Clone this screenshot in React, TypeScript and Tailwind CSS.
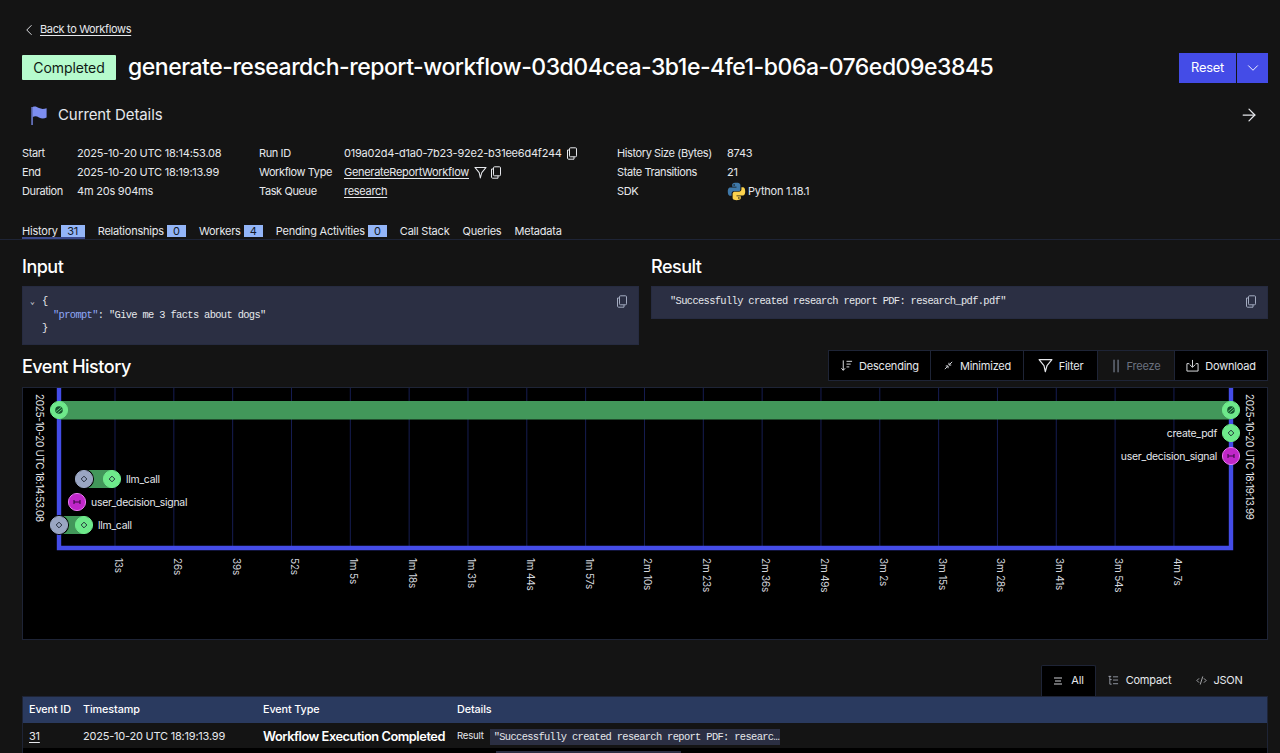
import React from 'react';
import { ChevronLeft, ChevronDown, ArrowRight, CodeXml } from 'lucide-react';

const TICKS = ['13s', '26s', '39s', '52s', '1m 5s', '1m 18s', '1m 31s', '1m 44s', '1m 57s', '2m 10s', '2m 23s', '2m 36s', '2m 49s', '3m 2s', '3m 15s', '3m 28s', '3m 41s', '3m 54s', '4m 7s'];

const CopyIcon = ({ className = '' }: { className?: string }) => (
  <svg viewBox="0 0 12 13" width="12" height="13" fill="none" stroke="currentColor" strokeWidth="1" className={className}>
    <rect x="3.5" y="0.8" width="7" height="9" rx="1" />
    <path d="M3.5 3H1.5V11.2C1.5 11.8 2 12.2 2.5 12.2H8V9.8" />
  </svg>
);

const FilterIcon = ({ size = 13 }: { size?: number }) => (
  <svg viewBox="0 0 14 14" width={size} height={size} fill="none" stroke="currentColor" strokeWidth="1.1" strokeLinejoin="round">
    <path d="M1 1.5H13L8.4 7.2L6.8 12.8L5.6 7.2Z" />
  </svg>
);

const Stat = ({ label, children, labelClass }: { label: string; children: React.ReactNode; labelClass: string }) => (
  <div className="flex items-center h-[19px]">
    <span className={`${labelClass} shrink-0 tracking-[-0.4px]`}>{label}</span>
    {children}
  </div>
);

const Tab = ({ label, count, active, wide }: { label: string; count?: string; active?: boolean; wide?: boolean }) => (
  <div className={`flex items-center gap-[3px] h-[14px] border-b-2 ${active ? 'border-[#3b4a8c]' : 'border-transparent'}`}>
    <span>{label}</span>
    {count && <span className={`bg-[#93b5f8] text-[#111827] ${wide ? 'w-[24px]' : 'w-[19px]'} h-[12px] text-[11px] leading-[12px] text-center`}>{count}</span>}
  </div>
);

const Node = ({ x, y, kind }: { x: number; y: number; kind: 'green' | 'gray' | 'pink' | 'flag' }) => {
  const fill = kind === 'gray' ? '#9aa6c3' : kind === 'pink' ? '#c026c9' : '#6ee98b';
  const ring = kind === 'gray' ? '#9aa6c3' : kind === 'pink' ? '#e879f0' : '#6ee98b';
  return (
    <g>
      {kind === 'gray' && <circle cx={x} cy={y} r={10} fill="#000" />}
      <circle cx={x} cy={y} r={8.6} fill={fill} stroke={ring} strokeWidth="1" />
      {(kind === 'green' || kind === 'gray') && (
        <rect x={x - 2} y={y - 2} width="4" height="4" fill="none" stroke="#1f2937" strokeWidth="0.9" transform={`rotate(45 ${x} ${y})`} />
      )}
      {kind === 'pink' && (
        <path d={`M${x - 3} ${y - 2}V${y + 2}M${x + 3} ${y - 2}V${y + 2}M${x - 3} ${y}H${x + 3}`} stroke="#3b0a45" strokeWidth="1.1" fill="none" />
      )}
      {kind === 'flag' && (
        <g>
          <circle cx={x} cy={y} r="3.8" fill="#14532d" />
          <path d={`M${x - 3} ${y + 1.5}L${x + 2.5} ${y - 3}M${x - 1.5} ${y + 3}L${x + 3.5} ${y - 1}`} stroke="#6ee98b" strokeWidth="0.8" />
        </g>
      )}
    </g>
  );
};

const Timeline = () => (
  <svg viewBox="23 388 1244 251" width="1244" height="251" className="block" fontFamily="Inter, sans-serif">
    {TICKS.map((t, i) => {
      const x = 115 + i * 58.83;
      return (
        <g key={t}>
          <line x1={x} y1={388} x2={x} y2={546} stroke="#161d52" strokeWidth="1" />
          <text transform={`translate(${x} 558) rotate(90)`} fontSize="10" letterSpacing="-0.2" fill="#d4d7de">{t}</text>
        </g>
      );
    })}
    <path d="M59 388V548H1231V388" fill="none" stroke="#444ce7" strokeWidth="4.4" />
    <rect x="59" y="401" width="1172" height="18.5" fill="#42975a" />
    <rect x="84" y="470" width="28" height="18" fill="#42975a" />
    <rect x="59" y="516" width="25" height="18" fill="#42975a" />
    <Node x={59} y={410} kind="flag" />
    <Node x={1231} y={410} kind="flag" />
    <Node x={1231} y={433} kind="green" />
    <Node x={1231} y={456} kind="pink" />
    <Node x={84} y={479} kind="gray" />
    <Node x={112} y={479} kind="green" />
    <Node x={77} y={502} kind="pink" />
    <Node x={59} y={525} kind="gray" />
    <Node x={84} y={525} kind="green" />
    <g fontSize="10.4" fill="#e5e7eb" letterSpacing="-0.25">
      <text x="126" y="483">llm_call</text>
      <text x="91" y="506">user_decision_signal</text>
      <text x="98" y="529">llm_call</text>
      <text x="1217" y="437" textAnchor="end">create_pdf</text>
      <text x="1217" y="460" textAnchor="end">user_decision_signal</text>
      <text transform="translate(36 394) rotate(90)" fontSize="10" letterSpacing="-0.33">2025-10-20 UTC 18:14:53.08</text>
      <text transform="translate(1246 394) rotate(90)" fontSize="10" letterSpacing="-0.33">2025-10-20 UTC 18:19:13.99</text>
    </g>
  </svg>
);

const ToolBtn = ({ icon, label, w, dim }: { icon: React.ReactNode; label: string; w: string; dim?: boolean }) => (
  <div className={`${w} flex items-center justify-center gap-[6px] border-r border-[#1e2436] last:border-r-0 ${dim ? 'bg-[#141414] text-[#6b7280]' : 'bg-black'}`}>
    {icon}
    <span className="pt-[1px]">{label}</span>
  </div>
);

export default function App() {
  return (
    <div className="h-[753px] w-[1280px] overflow-hidden bg-[#141414] text-[#e6e8ec] text-[11px] tracking-[-0.22px] font-['Inter',sans-serif]">
      <div className="pl-[22px] pr-[12px] pt-[21px]">
        <div className="flex items-center gap-[2px] h-[17px] -ml-[2px]">
          <ChevronLeft size={18} strokeWidth={1.25} />
          <span className="underline underline-offset-2 tracking-[-0.35px]">Back to Workflows</span>
        </div>

        <div className="flex items-center justify-between mt-[15px] h-[29px]">
          <div className="flex items-center gap-[12px]">
            <span className="bg-[#b6fbcd] text-[#0f1a14] w-[94px] h-[25px] flex items-center justify-center text-[14px] tracking-[-0.1px] rounded-[1px]">Completed</span>
            <h1 className="text-[23px] font-medium text-white leading-none tracking-[-0.48px]">generate-researdch-report-workflow-03d04cea-3b1e-4fe1-b06a-076ed09e3845</h1>
          </div>
          <div className="flex text-white text-[12.8px] h-[30px] gap-[1px]">
            <div className="w-[57px] bg-[#444ce7] flex items-center justify-center">Reset</div>
            <div className="w-[31px] bg-[#444ce7] flex items-center justify-center">
              <ChevronDown size={18} strokeWidth={1.25} />
            </div>
          </div>
        </div>

        <div className="flex items-center justify-between mt-[19px] h-[28px]">
          <div className="flex items-center gap-[11px] pl-[9px]">
            <svg viewBox="0 0 16 20" width="16" height="19" fill="#7d8ef0">
              <path d="M0 1H1.4V20H0Z" />
              <path d="M1.4 1C4 0 5.5 .8 8 2.2C10.5 3.4 13 3.2 16 2.4V12C13 13.6 10.5 13.4 8 12C5.5 10.8 4 10.4 1.4 11.6Z" />
            </svg>
            <span className="text-[15px] tracking-[-0.1px]">Current Details</span>
          </div>
          <ArrowRight size={20} strokeWidth={1.5} className="mr-[9px]" />
        </div>

        <div className="flex mt-[15px]">
          <div className="w-[237px]">
            <Stat label="Start" labelClass="w-[55px]">2025-10-20 UTC 18:14:53.08</Stat>
            <Stat label="End" labelClass="w-[55px]">2025-10-20 UTC 18:19:13.99</Stat>
            <Stat label="Duration" labelClass="w-[55px]">4m 20s 904ms</Stat>
          </div>
          <div className="w-[358px]">
            <Stat label="Run ID" labelClass="w-[85px]">
              019a02d4-d1a0-7b23-92e2-b31ee6d4f244
              <CopyIcon className="ml-[4px]" />
            </Stat>
            <Stat label="Workflow Type" labelClass="w-[85px]">
              <span className="underline underline-offset-2 tracking-[-0.3px]">GenerateReportWorkflow</span>
              <span className="ml-[5px]"><FilterIcon size={13} /></span>
              <CopyIcon className="ml-[3px]" />
            </Stat>
            <Stat label="Task Queue" labelClass="w-[85px]">
              <span className="underline underline-offset-2 tracking-[-0.3px]">research</span>
            </Stat>
          </div>
          <div>
            <Stat label="History Size (Bytes)" labelClass="w-[110px]">8743</Stat>
            <Stat label="State Transitions" labelClass="w-[110px]">21</Stat>
            <Stat label="SDK" labelClass="w-[110px]">
              <svg viewBox="0 0 24 24" width="19" height="19" className="mr-[2px]">
                <path fill="#3f78a8" d="M11.9 1C6.3 1 6.6 3.4 6.6 3.4V6h5.4v.8H4.4S1 6.4 1 12s3 5.4 3 5.4h1.8v-2.6s-.1-3 3-3h5.3s2.8 0 2.8-2.8V3.9S17.3 1 11.9 1zM9 2.7a1 1 0 1 1 0 2 1 1 0 0 1 0-2z" />
                <path fill="#fcd34d" d="M12.1 23c5.6 0 5.3-2.4 5.3-2.4V18H12v-.8h7.6s3.4.4 3.4-5.2-3-5.4-3-5.4h-1.800v2.600s.1 3-3 3H9.900s-2.800 0-2.800 2.800v4.900S6.700 23 12.100 23zm2.900-1.700a1 1 0 1 1 0-2 1 1 0 0 1 0 2z" />
              </svg>
              Python 1.18.1
            </Stat>
          </div>
        </div>

        <div className="flex gap-[13px] mt-[24px]">
          <Tab label="History" count="31" active wide />
          <Tab label="Relationships" count="0" />
          <Tab label="Workers" count="4" />
          <Tab label="Pending Activities" count="0" />
          <Tab label="Call Stack" />
          <Tab label="Queries" />
          <Tab label="Metadata" />
        </div>
      </div>

      <div className="border-t border-[#1e2436]" />

      <div className="pl-[22px] pr-[12px]">
        <div className="grid grid-cols-2 gap-[12px] mt-[15px] items-start h-[90px]">
          <div>
            <h2 className="text-[18px] font-medium leading-[23px] tracking-[-0.5px] text-white">Input</h2>
            <div className="relative mt-[8px] h-[59px] bg-[#2b2f43] border border-[#262b40] pl-[7px] pt-[8px] font-['Liberation_Mono',monospace] text-[10.4px] tracking-[-0.64px] leading-[13.5px]">
              <div><span className="inline-block w-[12px] text-[8px]">⌄</span>{'{'}</div>
              <div className="pl-[23px]"><span className="text-[#8fa8f8]">"prompt"</span>: "Give me 3 facts about dogs"</div>
              <div className="pl-[12px]">{'}'}</div>
              <CopyIcon className="absolute right-[10px] top-[8px] text-[#a3abc0]" />
            </div>
          </div>
          <div>
            <h2 className="text-[18px] font-medium leading-[23px] tracking-[-0.5px] text-white">Result</h2>
            <div className="relative mt-[8px] h-[33px] bg-[#2b2f43] border border-[#262b40] pl-[18px] pt-[8px] font-['Liberation_Mono',monospace] text-[10.4px] tracking-[-0.64px] leading-[13.5px]">
              "Successfully created research report PDF: research_pdf.pdf"
              <CopyIcon className="absolute right-[10px] top-[8px] text-[#a3abc0]" />
            </div>
          </div>
        </div>

        <div className="flex items-center justify-between mt-[5px] h-[31px]">
          <h2 className="text-[18px] font-medium tracking-[-0.5px] text-white pt-[1px]">Event History</h2>
          <div className="flex h-[31px] border border-[#1e2436]">
            <ToolBtn
              w="w-[102px]"
              label="Descending"
              icon={
                <svg viewBox="0 0 14 14" width="13" height="13" fill="none" stroke="currentColor" strokeWidth="1">
                  <path d="M3.5 1.5V12M1.5 10L3.5 12.2L5.5 10M7 2.5H13M7 5.5H11.5M7 8.5H10" />
                </svg>
              }
            />
            <ToolBtn
              w="w-[93px]"
              label="Minimized"
              icon={
                <svg viewBox="0 0 12 12" width="11" height="11" fill="none" stroke="currentColor" strokeWidth="1">
                  <path d="M2 10L5 7M3 6.5H5.5V9M10 2L7 5M9 5.5H6.5V3" />
                </svg>
              }
            />
            <ToolBtn w="w-[74px]" label="Filter" icon={<FilterIcon size={15} />} />
            <ToolBtn
              w="w-[77px]"
              label="Freeze"
              dim
              icon={
                <svg viewBox="0 0 10 14" width="9" height="14" fill="currentColor">
                  <rect x="1.5" y="0" width="1.5" height="14" />
                  <rect x="6" y="0" width="1.5" height="14" />
                </svg>
              }
            />
            <ToolBtn
              w="w-[92px]"
              label="Download"
              icon={
                <svg viewBox="0 0 14 14" width="13" height="13" fill="none" stroke="currentColor" strokeWidth="1">
                  <path d="M7 1V8.5M4 6L7 9L10 6M3.5 5H1V13H13V5H10.5" />
                </svg>
              }
            />
          </div>
        </div>

        <div className="mt-[6px] h-[253px] border border-[#1e2436] bg-black">
          <Timeline />
        </div>

        <div className="flex justify-end mt-[25px] h-[31px] pr-[12px]">
          <div className="w-[55px] flex items-center justify-center gap-[8px] pb-[1px] bg-black border border-b-0 border-[#1e2436] rounded-t-[2px]">
            <svg viewBox="0 0 10 8" width="10" height="8" fill="none" stroke="currentColor" strokeWidth="0.9">
              <path d="M1 1H9M2 4H8M1 7H9" />
            </svg>
            All
          </div>
          <div className="w-[87px] flex items-center justify-center gap-[7px]">
            <svg viewBox="0 0 12 12" width="11" height="11" fill="none" stroke="#a8adb8" strokeWidth="0.9">
              <path d="M2 1V10H4M2 5H4M0.5 1.5H3.5M5.5 2H11M5.5 5.5H11M5.5 9.5H11" />
            </svg>
            Compact
          </div>
          <div className="w-[73px] flex items-center justify-center gap-[6px]">
            <CodeXml size={11} strokeWidth={1.5} />
            JSON
          </div>
        </div>

        <div className="border-r border-l border-[#1e2436]">
          <div className="grid grid-cols-[60px_180px_194px_1fr] items-center h-[27px] pt-[1px] bg-[#2a3a5f] border-t border-[#1e2436] font-medium text-[10.8px] tracking-[-0.1px] text-white">
            <span className="pl-[6px]">Event ID</span>
            <span>Timestamp</span>
            <span>Event Type</span>
            <span>Details</span>
          </div>
          <div className="grid grid-cols-[60px_180px_194px_1fr] items-center h-[25px] pt-[2px]">
            <span className="pl-[6px] underline underline-offset-2">31</span>
            <span>2025-10-20 UTC 18:19:13.99</span>
            <span className="text-[12.8px] font-semibold tracking-[-0.45px] text-white whitespace-nowrap">Workflow Execution Completed</span>
            <div className="flex items-center gap-[6px]">
              <span className="text-[9.6px]">Result</span>
              <code className="w-[290px] h-[16px] bg-[#2b2f43] px-[4px] font-['Liberation_Mono',monospace] text-[10.4px] tracking-[-0.64px] leading-[16px] whitespace-nowrap overflow-hidden">"Successfully created research report PDF: researc…</code>
            </div>
          </div>
          <div className="h-[5px] bg-black relative">
            <div className="absolute left-[473px] top-[3px] w-[185px] h-[2px] bg-[#2b2f43]" />
          </div>
        </div>
      </div>
    </div>
  );
}
